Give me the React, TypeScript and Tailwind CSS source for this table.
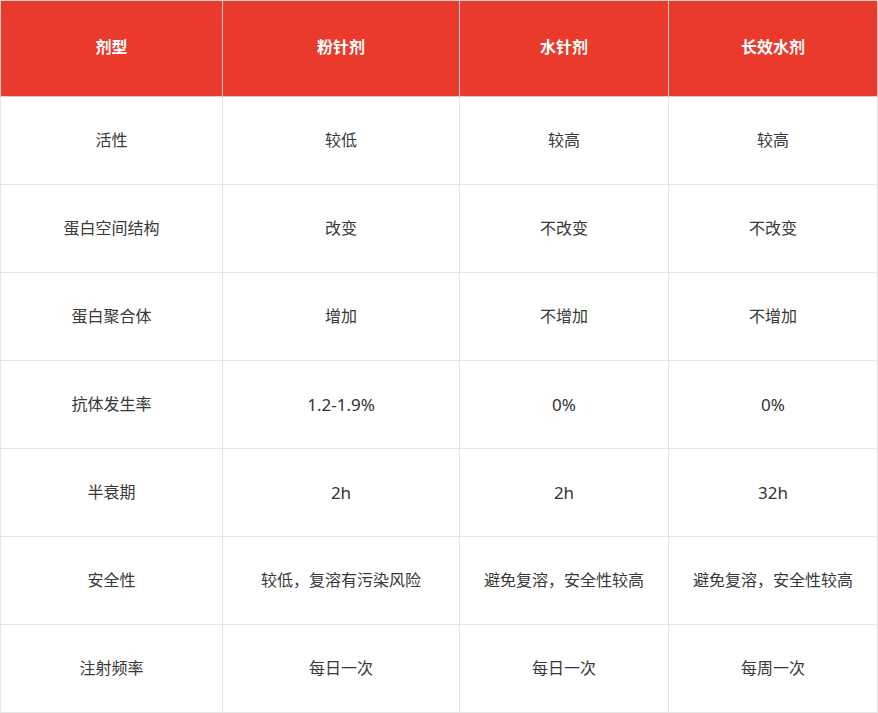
import React from "react";

const header = ["剂型", "粉针剂", "水针剂", "长效水剂"];
const rows = [
  ["活性", "较低", "较高", "较高"],
  ["蛋白空间结构", "改变", "不改变", "不改变"],
  ["蛋白聚合体", "增加", "不增加", "不增加"],
  ["抗体发生率", "1.2-1.9%", "0%", "0%"],
  ["半衰期", "2h", "2h", "32h"],
  ["安全性", "较低，复溶有污染风险", "避免复溶，安全性较高", "避免复溶，安全性较高"],
  ["注射频率", "每日一次", "每日一次", "每周一次"],
];

const isLatin = (s: string) => /^[\x00-\x7f]+$/.test(s);

export default function App() {
  return (
    <div
      className="w-[878px] bg-white"
      style={{ fontFamily: '"Noto Sans", "Noto Sans CJK SC", sans-serif' }}
    >
      <div className="grid grid-cols-[222px_237px_209px_209px] border-l border-t border-[#d2d2d2] w-[878px]">
        {header.map((h, i) => (
          <div
            key={i}
            className="h-[96px] flex items-center justify-center pb-[3px] bg-[#e93a2c] text-white font-bold text-[16px] leading-[24px] border-r border-b border-[#cfcfcf]"
          >
            {h}
          </div>
        ))}
      </div>
      <div className="grid grid-cols-[222px_237px_209px_209px] border-l border-[#e6e6e6] w-[878px]">
        {rows.map((r, ri) =>
          r.map((c, ci) =>
            isLatin(c) ? (
              <div
                key={ri + "-" + ci}
                className="h-[88px] flex items-center justify-center text-[#333333] text-[17px] leading-[24px] border-r border-b border-[#e6e6e6]"
              >
                {c}
              </div>
            ) : (
              <div
                key={ri + "-" + ci}
                className="h-[88px] flex items-center justify-center pb-[2px] text-[#383838] text-[16px] leading-[24px] border-r border-b border-[#e6e6e6]"
              >
                {c}
              </div>
            )
          )
        )}
      </div>
    </div>
  );
}
